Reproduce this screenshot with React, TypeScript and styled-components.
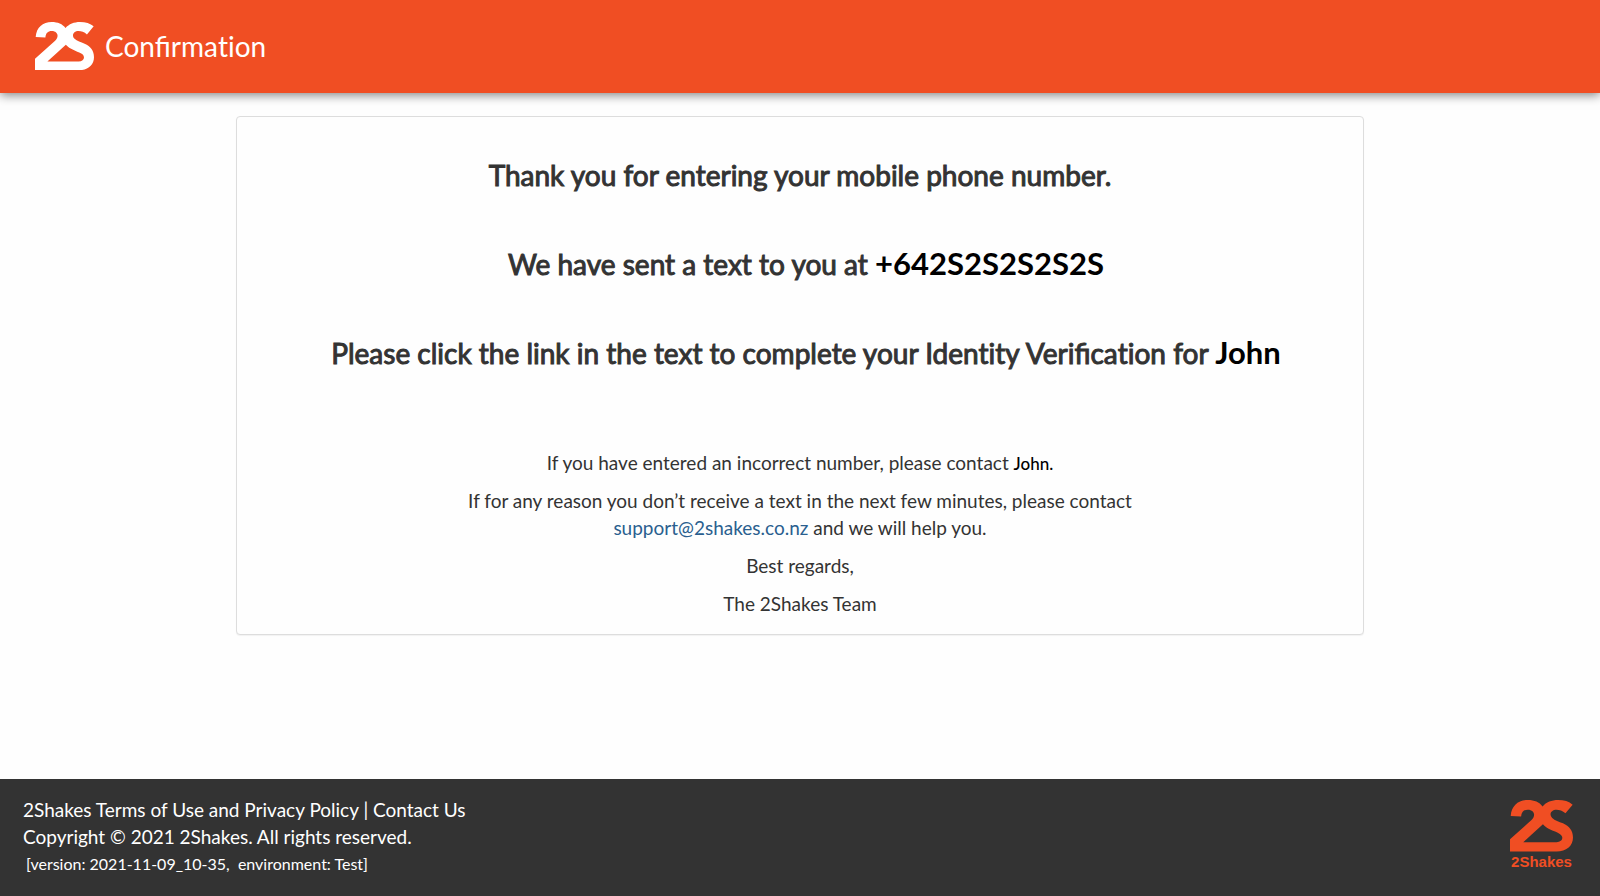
import React from "react";
import styled, { createGlobalStyle } from "styled-components";

const ORANGE = "#f04e23";

const GlobalStyle = createGlobalStyle`
  *, *::before, *::after { box-sizing: border-box; }
  body {
    margin: 0;
    background: #fefefe;
    color: #333;
    font-family: Lato, "Liberation Sans", sans-serif;
    font-size: 19px;
    line-height: 27px;
  }
`;

const Page = styled.div`
  display: flex;
  flex-direction: column;
  min-height: 100vh;
`;

const Header = styled.header`
  display: flex;
  align-items: center;
  gap: 11px;
  padding: 22px 35px 23px;
  background: ${ORANGE};
  color: #fff;
  box-shadow: 0 2px 10px rgba(0, 0, 0, 0.5);
`;

const PageTitle = styled.h1`
  margin: 0;
  font-size: 28px;
  font-weight: 400;
  line-height: 48px;
`;

/* Keeps "t" and "i" as separate letters. */
const Unjoined = styled.span`
  font-variant-ligatures: none;
`;

const LogoMark = styled.svg<{ $width: number }>`
  display: block;
  width: ${({ $width }) => $width}px;
  height: auto;
  fill: currentColor;
`;

const Main = styled.main`
  flex: 1;
  width: 100%;
  max-width: 1176px;
  margin: 0 auto;
  padding: 23px 24px;
`;

const Card = styled.section`
  padding: 38px 20px 17px;
  border: 1px solid #ddd;
  border-radius: 4px;
  background: #fefefe;
  box-shadow: 0 1px 1px rgba(0, 0, 0, 0.05);
  text-align: center;
`;

const Headline = styled.h2<{ $indented?: boolean }>`
  margin: 0 0 49px;
  padding-left: ${({ $indented }) => ($indented ? 12 : 0)}px;
  font-size: 28px;
  font-weight: 400;
  line-height: 40px;
  -webkit-text-stroke: 1px currentColor;
`;

const Strong = styled.strong`
  color: #000;
  font-size: 31px;
  font-weight: 700;
  line-height: 1;
  -webkit-text-stroke: 0;
`;

const Notes = styled.div`
  max-width: 700px;
  margin: 76px auto 0;
`;

const Note = styled.p`
  margin: 0 0 11px;

  &:last-child {
    margin-bottom: 0;
  }
`;

const ContactName = styled.span`
  color: #000;
  font-size: 17px;
  font-weight: 500;
  line-height: 1;
`;

const MailLink = styled.a`
  color: #2a5f8f;
  text-decoration: none;
`;

const Footer = styled.footer`
  display: flex;
  justify-content: space-between;
  padding: 17px 27px 19px 23px;
  background: #333;
  color: #fff;
`;

const FooterLink = styled.a`
  color: inherit;
  text-decoration: none;
`;

const Version = styled.small`
  display: block;
  padding-left: 3px;
  font-size: 16px;
  white-space: pre;
`;

const Brand = styled.div`
  display: flex;
  flex-direction: column;
  align-items: center;
  padding-top: 4px;
  color: ${ORANGE};
`;

const BrandName = styled.span`
  font-family: "Liberation Sans", Arial, sans-serif;
  font-size: 15px;
  font-weight: 700;
  line-height: 20px;
`;

function Logo({ width }: { width: number }) {
  return (
    <LogoMark $width={width} viewBox="0 0 176 144" aria-hidden="true">
      <path
        fillRule="evenodd"
        d="M2 45C4 16 23 0 50 0C68 0 82 6 91 18C101 6 117 0 134 0C151 0 165 4 175 13L155 37C147 30 138 27 130 27C115 27 108 40 118 50C125 57 137 60 148 65C166 73 176 86 176 105C176 129 157 144 130 144H0V110L60 56C73 44 68 27 50 27C38 27 32 34 31 46ZM92 68L37 118H130C147 118 152 102 138 94C123 86 104 82 92 68Z"
      />
    </LogoMark>
  );
}

export default function App() {
  return (
    <>
      <GlobalStyle />
      <Page>
        <Header>
          <Logo width={59} />
          <PageTitle>
            Confirma<Unjoined>tion</Unjoined>
          </PageTitle>
        </Header>
        <Main>
          <Card>
            <Headline>Thank you for entering your mobile phone number.</Headline>
            <Headline $indented>
              We have sent a text to you at <Strong>+642S2S2S2S2S</Strong>
            </Headline>
            <Headline $indented>
              Please click the link in the text to complete your <Unjoined>Identity</Unjoined> Verifica
              <Unjoined>tion</Unjoined> for <Strong>John</Strong>
            </Headline>
            <Notes>
              <Note>
                If you have entered an incorrect number, please contact <ContactName>John.</ContactName>
              </Note>
              <Note>
                If for any reason you don’t receive a text in the next few minutes, please contact
                <br />
                <MailLink href="mailto:support@2shakes.co.nz">support@2shakes.co.nz</MailLink> and we will help you.
              </Note>
              <Note>Best regards,</Note>
              <Note>The 2Shakes Team</Note>
            </Notes>
          </Card>
        </Main>
        <Footer>
          <div>
            <div>
              <FooterLink href="#terms">2Shakes Terms of Use and Privacy Policy</FooterLink> |{" "}
              <FooterLink href="#contact">Contact Us</FooterLink>
            </div>
            <div>Copyright © 2021 2Shakes. All rights reserved.</div>
            <Version>{"[version: 2021-11-09_10-35,  environment: Test]"}</Version>
          </div>
          <Brand>
            <Logo width={63} />
            <BrandName>2Shakes</BrandName>
          </Brand>
        </Footer>
      </Page>
    </>
  );
}
